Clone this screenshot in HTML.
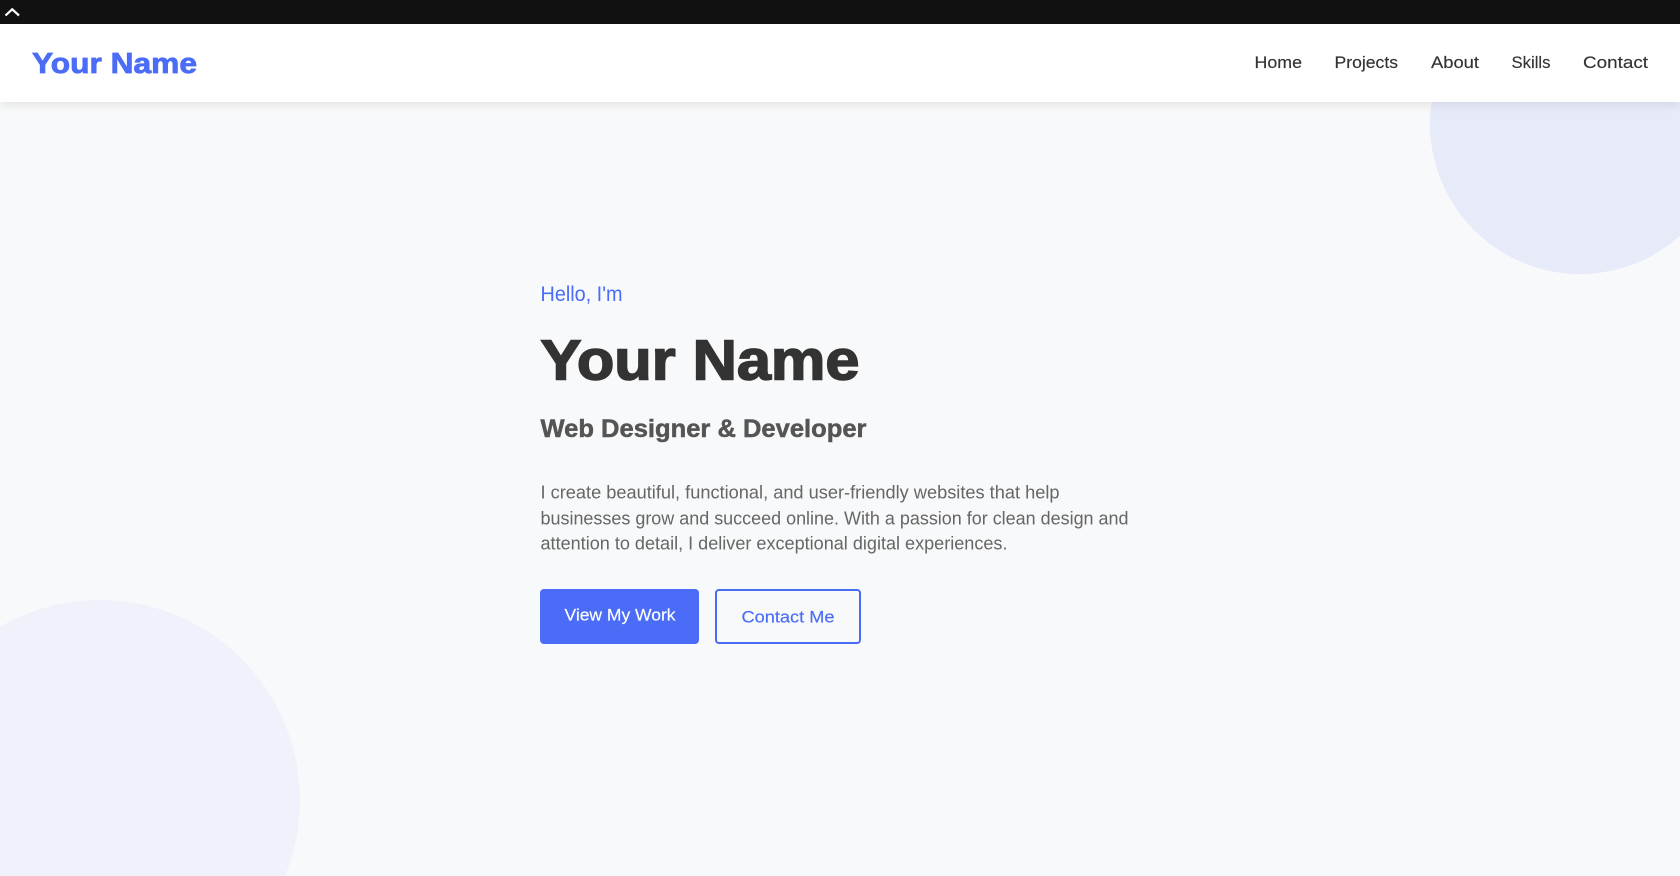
<!DOCTYPE html>
<html lang="en">
<head>
<meta charset="utf-8">
<title>Your Name</title>
<style>
html,body{margin:0;padding:0;width:1680px;height:876px;overflow:hidden;background:#f8f9fa;}
*{box-sizing:border-box;}
#page{position:relative;width:1680px;height:876px;overflow:hidden;background:#f8f9fa;}
.abs{position:absolute;}
#nav{left:0;top:24px;width:1680px;height:78px;background:#fff;box-shadow:0 2px 10px rgba(0,0,0,.1);}
#top{left:0;top:0;width:1680px;height:24px;background:#111;}
#b1{left:540px;top:589px;width:159px;height:55px;background:#4a6cf7;border-radius:4px;}
#b2{left:715px;top:589px;width:146px;height:55px;border:2px solid #4a6cf7;border-radius:4px;}
svg{position:absolute;left:0;top:0;display:block;}
text{font-family:"Liberation Sans",sans-serif;}
</style>
</head>
<body>
<div id="page">
<svg width="1680" height="876" viewBox="0 0 1680 876" xmlns="http://www.w3.org/2000/svg">
<path d="M1468.2 24 A150 150 0 0 0 1680 235.8 L1680 24 Z" fill="#4a6cf7" fill-opacity=".1"/>
<path d="M0 626.8 A200 200 0 0 1 285 876 L0 876 Z" fill="#4a6cf7" fill-opacity=".05"/>
</svg>
<div class="abs" id="nav"></div>
<div class="abs" id="top"></div>
<div class="abs" id="b1"></div>
<div class="abs" id="b2"></div>
<svg width="1680" height="876" viewBox="0 0 1680 876" xmlns="http://www.w3.org/2000/svg">
<path d="M5.5 15.5 L12.2 9.3 L19 15.5" fill="none" stroke="#fff" stroke-width="2.2"/>
<text x="32" y="73" font-size="29" font-weight="700" fill="#4a6cf7" stroke="#4a6cf7" stroke-width=".8" textLength="165" lengthAdjust="spacingAndGlyphs">Your Name</text>
<g font-size="16.5" fill="#333" stroke="#333" stroke-width=".15">
<text x="1254.5" y="68" textLength="47.5" lengthAdjust="spacingAndGlyphs">Home</text>
<text x="1334.5" y="68" textLength="63.5" lengthAdjust="spacingAndGlyphs">Projects</text>
<text x="1431" y="68" textLength="48" lengthAdjust="spacingAndGlyphs">About</text>
<text x="1511.5" y="68" textLength="39" lengthAdjust="spacingAndGlyphs">Skills</text>
<text x="1583" y="68" textLength="65" lengthAdjust="spacingAndGlyphs">Contact</text>
</g>
<text x="540.5" y="301" font-size="20.8" fill="#4a6cf7" textLength="82" lengthAdjust="spacingAndGlyphs">Hello, I'm</text>
<text x="540.5" y="379.5" font-size="57" font-weight="700" fill="#333" stroke="#333" stroke-width="1.6" textLength="319" lengthAdjust="spacingAndGlyphs">Your Name</text>
<text x="540.5" y="437" font-size="25" font-weight="700" fill="#555" stroke="#555" stroke-width=".5" textLength="326" lengthAdjust="spacingAndGlyphs">Web Designer &amp; Developer</text>
<g font-size="18" fill="#666">
<text x="540.5" y="498.5" textLength="519" lengthAdjust="spacingAndGlyphs">I create beautiful, functional, and user-friendly websites that help</text>
<text x="540.5" y="524.5" textLength="588" lengthAdjust="spacingAndGlyphs">businesses grow and succeed online. With a passion for clean design and</text>
<text x="540.5" y="549.5" textLength="467" lengthAdjust="spacingAndGlyphs">attention to detail, I deliver exceptional digital experiences.</text>
</g>
<text x="564.5" y="620.5" font-size="16.5" fill="#fff" stroke="#fff" stroke-width=".15" textLength="111" lengthAdjust="spacingAndGlyphs">View My Work</text>
<text x="741.5" y="622.5" font-size="16.5" fill="#4a6cf7" stroke="#4a6cf7" stroke-width=".15" textLength="93" lengthAdjust="spacingAndGlyphs">Contact Me</text>
</svg>
</div>
</body>
</html>
